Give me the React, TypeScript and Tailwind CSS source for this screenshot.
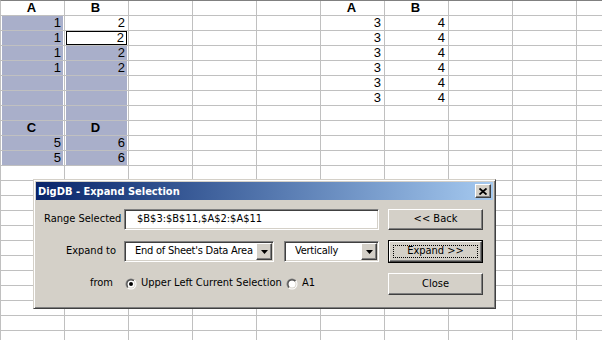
import React from "react";

const ROWS = 23;
const COLS = 10;

type Cell = { t: string; bold?: boolean };

const data: Record<string, Cell> = {};
const put = (r: number, c: number, t: string, bold = false) => {
  data[`${r},${c}`] = { t, bold };
};
put(0, 0, "A", true);
put(0, 1, "B", true);
put(0, 5, "A", true);
put(0, 6, "B", true);
for (let r = 1; r <= 4; r++) {
  put(r, 0, "1");
  put(r, 1, "2");
}
for (let r = 1; r <= 6; r++) {
  put(r, 5, "3");
  put(r, 6, "4");
}
put(8, 0, "C", true);
put(8, 1, "D", true);
for (let r = 9; r <= 10; r++) {
  put(r, 0, "5");
  put(r, 1, "6");
}

const isShaded = (r: number, c: number) =>
  (c === 0 && r >= 1 && r <= 10) || (c === 1 && r >= 3 && r <= 10);

function SheetCell({ r, c }: { r: number; c: number }) {
  const cell = data[`${r},${c}`];
  const shaded = isShaded(r, c);
  const active = r === 2 && c === 1;
  const align = cell?.bold ? "justify-center" : "justify-end";
  return (
    <div className="w-[64px] h-full shrink-0 border-r border-[#c0c0c0] relative">
      <div
        className={`absolute inset-y-0 left-[1px] right-[1px] flex items-center ${align} pr-[2px] ${
          shaded ? "bg-[#a9afca]" : ""
        } ${active ? "border border-black" : ""}`}
      >
        {cell ? (
          <span className={`leading-[14px] ${cell.bold ? "font-bold" : ""}`}>{cell.t}</span>
        ) : null}
      </div>
    </div>
  );
}

function Sheet() {
  return (
    <div className="flex flex-col border-t border-[#808080] border-l border-l-[#c0c0c0] font-['Liberation_Sans',Arial,sans-serif] text-[13px] text-black">
      {Array.from({ length: ROWS }).map((_, r) => (
        <div key={r} className="flex h-[15px] shrink-0 border-b border-[#c0c0c0]">
          {Array.from({ length: COLS }).map((__, c) => (
            <SheetCell key={c} r={r} c={c} />
          ))}
        </div>
      ))}
    </div>
  );
}

const raised =
  "bg-[#d4d0c8] border border-t-white border-l-white border-r-[#404040] border-b-[#404040] shadow-[inset_-1px_-1px_0_#808080,inset_1px_1px_0_#d4d0c8]";
const sunken =
  "bg-white border border-t-[#808080] border-l-[#808080] border-r-white border-b-white shadow-[inset_1px_1px_0_#404040,inset_-1px_-1px_0_#d4d0c8]";

function Arrow() {
  return (
    <div className={`${raised} w-[16px] h-[17px] flex items-center justify-center shrink-0`}>
      <svg width="7" height="4" viewBox="0 0 7 4">
        <path d="M0 0H7L3.5 4Z" fill="#000" />
      </svg>
    </div>
  );
}

function Select({ w, text }: { w: string; text: string }) {
  return (
    <div className={`${sunken} ${w} h-[21px] flex items-center pl-[10px] pr-[1px] shrink-0`}>
      <span className="flex-1 whitespace-nowrap overflow-hidden tracking-[-0.25px]">{text}</span>
      <Arrow />
    </div>
  );
}

function Radio({ checked }: { checked: boolean }) {
  const id = checked ? "rg1" : "rg2";
  return (
    <svg width="12" height="12" viewBox="0 0 12 12" className="shrink-0">
      <defs>
        <linearGradient id={id + "o"} x1="0" y1="0" x2="1" y2="1">
          <stop offset="0.5" stopColor="#808080" />
          <stop offset="0.5" stopColor="#ffffff" />
        </linearGradient>
        <linearGradient id={id + "i"} x1="0" y1="0" x2="1" y2="1">
          <stop offset="0.5" stopColor="#404040" />
          <stop offset="0.5" stopColor="#d4d0c8" />
        </linearGradient>
      </defs>
      <circle cx="6" cy="6" r="5.5" fill={`url(#${id}o)`} />
      <circle cx="6" cy="6" r="4.5" fill={`url(#${id}i)`} />
      <circle cx="6" cy="6" r="3.5" fill="#fff" />
      {checked ? <circle cx="6" cy="6" r="2" fill="#000" /> : null}
    </svg>
  );
}

function Dialog() {
  return (
    <div className="absolute left-[33px] top-[179px] w-[463px] h-[130px] bg-[#d4d0c8] border border-t-[#d4d0c8] border-l-[#d4d0c8] border-r-[#404040] border-b-[#404040] shadow-[inset_1px_1px_0_#fff,inset_-1px_-1px_0_#808080] p-[2px] flex flex-col font-['DejaVu_Sans_Condensed','Liberation_Sans',sans-serif] text-[11px] text-black">
      <div className="h-[18px] shrink-0 bg-gradient-to-r from-[#0a246a] to-[#a6caf0] flex items-center justify-between pl-[2px] pr-[2px]">
        <span className="text-white font-bold text-[11px] leading-none">DigDB - Expand Selection</span>
        <div className={`${raised} w-[16px] h-[14px] flex items-center justify-center`}>
          <svg width="8" height="7" viewBox="0 0 8 7">
            <path d="M0.5 0.5L7.5 6.5M7.5 0.5L0.5 6.5" stroke="#000" strokeWidth="1.8" />
          </svg>
        </div>
      </div>
      <div className="flex flex-col pt-[8px]">
        <div className="flex items-center h-[23px]">
          <div className="w-[88px] pl-[8px] shrink-0 whitespace-nowrap">Range Selected</div>
          <div className={`${sunken} w-[255px] h-[21px] flex items-center pl-[12px] shrink-0`}>
            $B$3:$B$11,$A$2:$A$11
          </div>
          <div className={`${raised} ml-[9px] w-[95px] h-[21px] flex items-center justify-center`}>
            &lt;&lt; Back
          </div>
        </div>
        <div className="flex items-center h-[23px] mt-[9px]">
          <div className="w-[88px] pr-[8px] text-right shrink-0 whitespace-nowrap">Expand to</div>
          <Select w="w-[150px]" text="End of Sheet's Data Area" />
          <div className="ml-[10px]">
            <Select w="w-[95px]" text="Vertically" />
          </div>
          <div className="ml-[9px] w-[95px] h-[23px] border border-black shrink-0">
            <div className={`${raised} w-full h-full flex items-center justify-center p-[3px]`}>
              <div className="w-full h-full border border-dotted border-black flex items-center justify-center">
                Expand &gt;&gt;
              </div>
            </div>
          </div>
        </div>
        <div className="flex items-center h-[23px] mt-[9px]">
          <div className="w-[88px] pr-[11px] text-right shrink-0 whitespace-nowrap">from</div>
          <div className="w-[264px] flex items-center shrink-0">
            <div className="ml-[1px]">
              <Radio checked />
            </div>
            <span className="ml-[4px] w-[141px] whitespace-nowrap">Upper Left Current Selection</span>
            <div className="ml-[4px]">
              <Radio checked={false} />
            </div>
            <span className="ml-[4px]">A1</span>
          </div>
          <div className={`${raised} w-[95px] h-[22px] flex items-center justify-center mt-[1px]`}>
            Close
          </div>
        </div>
      </div>
    </div>
  );
}

export default function App() {
  return (
    <div className="relative w-[602px] h-[340px] overflow-hidden bg-white">
      <Sheet />
      <Dialog />
    </div>
  );
}
